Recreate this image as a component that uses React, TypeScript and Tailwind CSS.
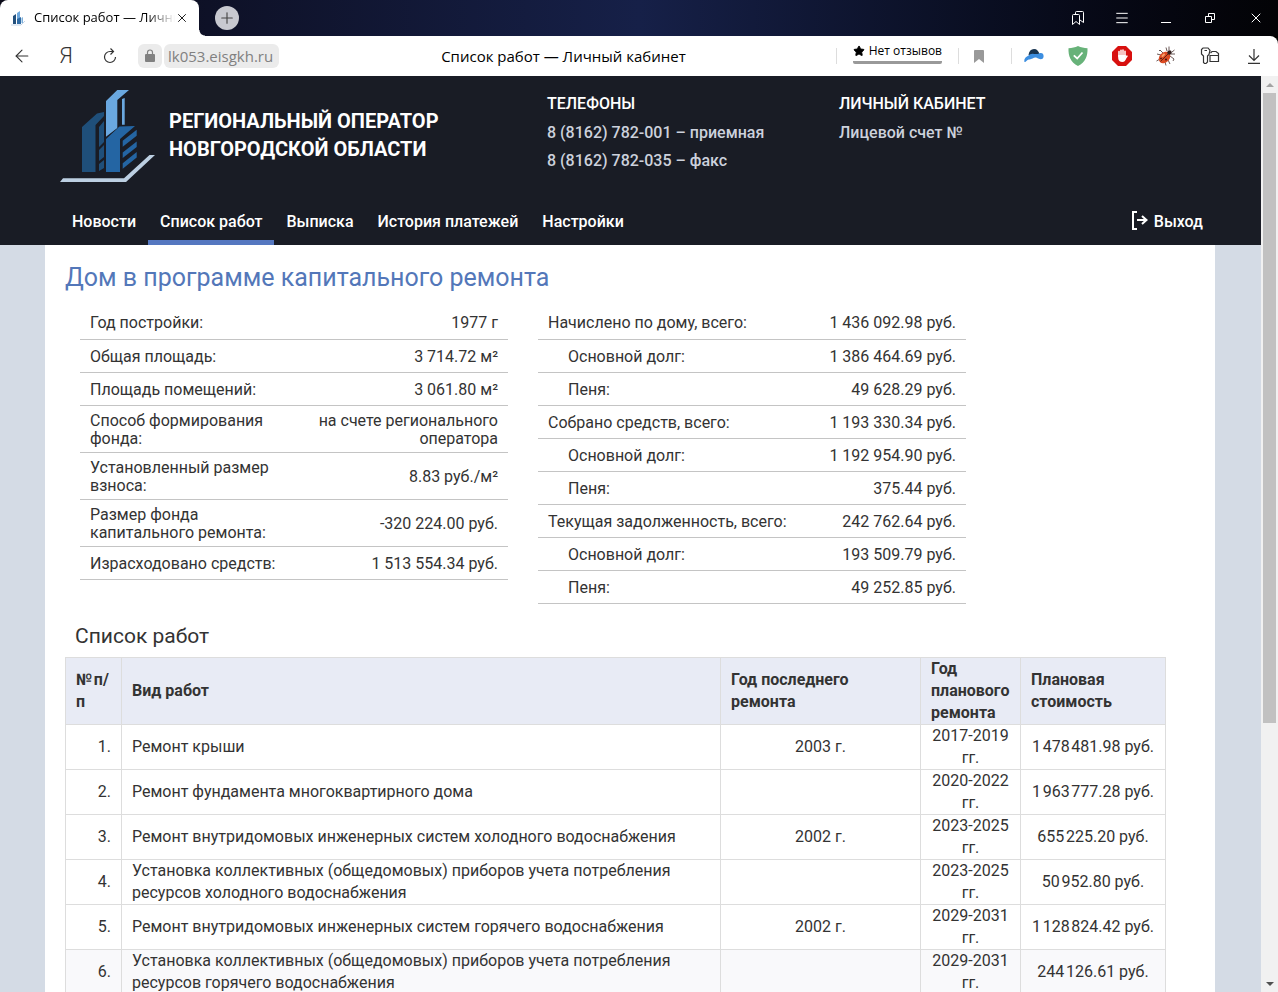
import { ArrowLeft, Menu, Plus, Star, X } from 'lucide-react';

type InfoRow = {
  label: string;
  value: string;
  nested?: boolean;
};

type Work = {
  name: string;
  last?: string;
  planned: string;
  cost: string;
};

const houseRows: InfoRow[] = [
  { label: 'Год постройки:', value: '1977 г' },
  { label: 'Общая площадь:', value: '3 714.72 м²' },
  { label: 'Площадь помещений:', value: '3 061.80 м²' },
  { label: 'Способ формирования фонда:', value: 'на счете регионального оператора' },
  { label: 'Установленный размер взноса:', value: '8.83 руб./м²' },
  { label: 'Размер фонда капитального ремонта:', value: '-320 224.00 руб.' },
  { label: 'Израсходовано средств:', value: '1 513 554.34 руб.' },
];

const moneyRows: InfoRow[] = [
  { label: 'Начислено по дому, всего:', value: '1 436 092.98 руб.' },
  { label: 'Основной долг:', value: '1 386 464.69 руб.', nested: true },
  { label: 'Пеня:', value: '49 628.29 руб.', nested: true },
  { label: 'Собрано средств, всего:', value: '1 193 330.34 руб.' },
  { label: 'Основной долг:', value: '1 192 954.90 руб.', nested: true },
  { label: 'Пеня:', value: '375.44 руб.', nested: true },
  { label: 'Текущая задолженность, всего:', value: '242 762.64 руб.' },
  { label: 'Основной долг:', value: '193 509.79 руб.', nested: true },
  { label: 'Пеня:', value: '49 252.85 руб.', nested: true },
];

// thousands are split with a hair space
const works: Work[] = [
  { name: 'Ремонт крыши', last: '2003 г.', planned: '2017-2019 гг.', cost: '1\u200A478\u200A481.98 руб.' },
  { name: 'Ремонт фундамента многоквартирного дома', planned: '2020-2022 гг.', cost: '1\u200A963\u200A777.28 руб.' },
  { name: 'Ремонт внутридомовых инженерных систем холодного водоснабжения', last: '2002 г.', planned: '2023-2025 гг.', cost: '655\u200A225.20 руб.' },
  { name: 'Установка коллективных (общедомовых) приборов учета потребления ресурсов холодного водоснабжения', planned: '2023-2025 гг.', cost: '50\u200A952.80 руб.' },
  { name: 'Ремонт внутридомовых инженерных систем горячего водоснабжения', last: '2002 г.', planned: '2029-2031 гг.', cost: '1\u200A128\u200A824.42 руб.' },
  { name: 'Установка коллективных (общедомовых) приборов учета потребления ресурсов горячего водоснабжения', planned: '2029-2031 гг.', cost: '244\u200A126.61 руб.' },
];

const navItems = ['Новости', 'Список работ', 'Выписка', 'История платежей', 'Настройки'];
const activeItem = 'Список работ';

const Logo = () => (
  <svg viewBox="0 0 95 92" className="w-[95px] h-[92px] shrink-0">
    <path d="M22 37 L37 23.500 L44 22 V26 L35.500 35 V82 H22 Z" fill="#1f4f7a" />
    <path d="M39 37 L44 31 V52 L39 57 Z M39 60 L44 55 V67 L39 71 Z M39 74 L44 70 V78 L39 81 Z" fill="#1f4f7a" />
    <path d="M46 11 L57.300 0 H69 L57.300 10 V38 L46 46.700 Z" fill="#6aa8e0" />
    <path d="M62 9 L64.700 8 V34.700 H62 Z" fill="#6aa8e0" />
    <path d="M46 49 L59.500 36.500 L75 36 L60 49 V82 H46 Z" fill="#2465a3" />
    <path d="M62.700 50.700 L76.700 39.700 V45.700 L62.700 56.700 Z M62.700 62.500 L76.700 51.500 V57 L62.700 68 Z M62.700 73.300 L76.700 62 V67.500 L62.700 78.700 Z" fill="#2465a3" />
    <path d="M0 92 L3 88.300 H64 L89.500 65 H95 L66 92 Z" fill="#bccfe2" />
  </svg>
);

const TitleBar = () => (
  <div className="h-9 flex items-stretch bg-linear-to-r from-[#0a0a18] via-[#162048] to-[#030306]">
    <div className="w-[199px] bg-white rounded-t-lg flex items-center px-2.5">
      <svg viewBox="0 0 16 16" className="w-4 h-4 mr-2">
        <path d="M1 15 H11 L15 11" fill="none" stroke="#c3d3e6" />
        <path d="M3 6 L6 4 V14 H3 Z" fill="#24507c" />
        <path d="M7 3 L10 1 V8 L7 10 Z" fill="#6fa9de" />
        <path d="M7 9 L11 7 V14 H7 Z" fill="#2f6ba5" />
        <path d="M11.500 8 L13 7 V13 H11.500 Z" fill="#7fb0da" />
      </svg>
      <span className="flex-1 overflow-hidden whitespace-nowrap text-[13px] text-black font-['Open_Sans',sans-serif] mask-r-from-80%">
        Список работ — Личный кабинет
      </span>
      <button aria-label="Закрыть вкладку"><X size={14} strokeWidth={1.5} /></button>
    </div>
    <div className="w-1.5 h-1.5 self-end bg-[radial-gradient(circle_at_100%_0%,transparent_5px,white_6px)]" />
    <button aria-label="Новая вкладка" className="self-center ml-2.5 w-6 h-6 rounded-full bg-[#c8c9d0] flex items-center justify-center text-[#444]">
      <Plus size={18} strokeWidth={1.5} />
    </button>
    <div className="ml-auto flex items-center gap-7 pr-3.5 text-white">
      <button aria-label="Закладки">
        <svg viewBox="0 0 16 16" className="w-4 h-4" fill="none" stroke="currentColor">
          <path d="M2.500 5.500 Q2.500 4.500 3.500 4.500 H8.500 Q9.500 4.500 9.500 5.500 V14.500 L6 11.500 L2.500 14.500 Z" />
          <path d="M5.500 4.500 V2.500 Q5.500 1.500 6.500 1.500 H12.500 Q13.500 1.500 13.500 2.500 V12.500 L10 10" />
        </svg>
      </button>
      <button aria-label="Меню"><Menu size={16} strokeWidth={1.5} /></button>
      <button aria-label="Свернуть">
        <svg viewBox="0 0 16 16" className="w-4 h-4" stroke="currentColor"><path d="M3 12.500 H13" /></svg>
      </button>
      <button aria-label="Развернуть" className="mr-0.5">
        <svg viewBox="0 0 16 16" className="w-4 h-4" fill="none" stroke="currentColor">
          <path d="M3.500 6.500 H9.500 V12.500 H3.500 Z M6.500 6 V3.500 H12.500 V9.500 H10" />
        </svg>
      </button>
      <button aria-label="Закрыть"><X size={16} strokeWidth={1.5} /></button>
    </div>
  </div>
);

const toolButton = 'w-11 h-10 flex items-center justify-center';

const Toolbar = () => (
  <div className="bg-black">
    <div className="h-10 flex items-center bg-white rounded-tr-lg pr-0.5 text-[#333] font-['Open_Sans',sans-serif]">
      <button aria-label="Назад" className={toolButton}><ArrowLeft size={20} strokeWidth={1.3} /></button>
      <button aria-label="Яндекс" className={toolButton}>
        <span className="text-[22px] leading-10 font-light font-[Roboto,sans-serif]">Я</span>
      </button>
      <button aria-label="Обновить" className={toolButton}>
        <svg viewBox="0 0 16 16" className="w-4 h-4" fill="none" stroke="currentColor" strokeWidth="1.2">
          <path d="M13.500 9 A5.500 5.500 0 1 1 8 3.500 H11.500" />
          <path d="M8.500 0.500 L11.500 3.500 L8.500 6.500" />
        </svg>
      </button>
      <div className="ml-1.5 w-6 h-6 rounded-md bg-[#ebebeb] flex items-center justify-center">
        <svg viewBox="0 0 12 14" className="w-3 h-3.5">
          <path d="M3.500 6 V3.500 a2.500 2.500 0 0 1 5 0 V6" fill="none" stroke="#808080" strokeWidth="1.200" />
          <rect x="1" y="5" width="10" height="8" rx="1" fill="#808080" />
        </svg>
      </div>
      <div className="ml-0.5 h-6 px-1 pr-1.5 rounded-md bg-[#ebebeb] text-[15px] leading-6 text-[#808080]">lk053.eisgkh.ru</div>
      <div className="flex-1 pl-3 text-center text-[15px] leading-6 text-black">Список работ — Личный кабинет</div>
      <div className="w-px h-4 bg-[#ddd]" />
      <a href="#" className="mx-4 mt-[5px] self-start flex items-center gap-1 border-b-3 border-[#999] rounded-xs text-xs leading-5 text-black">
        <Star size={12} fill="black" />
        Нет отзывов
      </a>
      <div className="w-px h-4 bg-[#ddd]" />
      <button aria-label="В закладки" className="w-10 h-10 mr-3 flex items-center justify-center">
        <svg viewBox="0 0 10 13" className="w-2.5 h-[13px]"><path d="M0 1 Q0 0 1 0 H9 Q10 0 10 1 V13 L5 9 L0 13 Z" fill="#999" /></svg>
      </button>
      <div className="w-px h-4 bg-[#ddd]" />
      <button aria-label="Расширение" className={toolButton}>
        <svg viewBox="0 0 20 16" className="w-5 h-4">
          <path d="M4.500 7 C5 3 7 1 10 1 C13 1 14.500 3 15.500 6 Z" fill="#17334f" />
          <path d="M0.500 14 C-0.500 10 3 8.500 6 6.500 C9 4.500 11 7 15 5.500 C18 4 20 6 19.500 9 C19 12 15.500 11.500 13 10 C10 8.500 8 12 5 11.500 C3 11.300 2 14.500 0.500 14 Z" fill="#3c8ee0" />
        </svg>
      </button>
      <button aria-label="Защита" className={toolButton}>
        <svg viewBox="0 0 20 20" className="w-5 h-5">
          <path d="M10 0 C13 1.500 16 2 19.500 2.200 C19.800 10 17.500 16 10 20 C2.500 16 0.200 10 0.500 2.200 C4 2 7 1.500 10 0 Z" fill="#67b279" />
          <path d="M5.800 9.300 L9.200 12.500 L14.500 6.500" fill="none" stroke="#fff" strokeWidth="1.800" />
        </svg>
      </button>
      <button aria-label="Блокировщик рекламы" className={toolButton}>
        <svg viewBox="0 0 20 20" className="w-5 h-5">
          <path d="M6 0 H14 L20 6 V14 L14 20 H6 L0 14 V6 Z" fill="#d8100f" />
          <path d="M7 10.500 V5.500 M9 10 V4.200 M11 10 V4 M13 10.500 V5.200" fill="none" stroke="#fff" strokeWidth="1.500" strokeLinecap="round" />
          <path d="M6.200 9 H13.800 V12 C13.800 14.500 12.500 16 10.300 16 C8 16 6.200 14.500 6.200 12 Z" fill="#fff" />
          <path d="M15 10 L13 13" stroke="#fff" strokeWidth="1.400" strokeLinecap="round" />
        </svg>
      </button>
      <button aria-label="Жук" className={toolButton}>
        <svg viewBox="0 0 20 20" className="w-5 h-5">
          <path d="M7 7 L4 4 L3 5 M12 14 L14 18 M5 9 L1 8 M9 16 L10 19.500 M4 13 L0.500 15 M14 10 L18 13 L17 15 M11 5 L10 1.500 M15 8 L19 8 M13 4 L13 0.500 M16 6 L18.500 4" fill="none" stroke="#5a4644" strokeWidth="0.900" />
          <ellipse cx="8.500" cy="11.500" rx="6.500" ry="5" transform="rotate(-45 8.500 11.500)" fill="#dc4a22" />
          <path d="M12.500 7.500 L4.500 15.500" stroke="#4a1a10" strokeWidth="0.800" />
          <path d="M6.500 10 L8 8.500" stroke="#f5a06a" strokeWidth="2" strokeLinecap="round" />
          <circle cx="10" cy="13.500" r="0.900" fill="#2a1210" />
          <circle cx="5" cy="12.500" r="0.800" fill="#2a1210" />
          <circle cx="13.500" cy="6.500" r="2.200" fill="#33211f" />
        </svg>
      </button>
      <button aria-label="Пароли" className={toolButton}>
        <svg viewBox="0 0 20 18" className="w-5 h-[18px]" fill="none" stroke="currentColor" strokeWidth="1.200">
          <path d="M3 1 H8 L10 3.500 L9 7.500 L7.500 9 V15 L6 16.500 H4.500 L3.500 15.500 V9 L1.500 7 V2.500 Z M4.500 3.500 H7" />
          <path d="M10.500 6 L12 4.500 H16 L18.500 6.500 V14.500 H10 V8.500 H18.500" />
        </svg>
      </button>
      <button aria-label="Загрузки" className={toolButton}>
        <svg viewBox="0 0 14 16" className="w-3.5 h-4" fill="none" stroke="currentColor" strokeWidth="1.200">
          <path d="M7 1 V12 M2 7.500 L7 12.500 L12 7.500 M1 15.300 H13" />
        </svg>
      </button>
    </div>
  </div>
);

const Header = () => (
  <header className="bg-[#191c25] text-white text-base pl-[60px] pr-[58px] pt-3.5">
    <div className="grid grid-cols-[487px_292px_1fr]">
      <div className="flex items-center gap-3.5">
        <Logo />
        <p className="text-xl leading-7 pb-0.5 font-bold uppercase">Региональный оператор<br />Новгородской области</p>
      </div>
      <div className="leading-7 font-medium text-[#ccd1dc]">
        <h2 className="pb-px text-white uppercase">Телефоны</h2>
        <p>8 (8162) 782-001 – приемная</p>
        <p>8 (8162) 782-035 – факс</p>
      </div>
      <div className="leading-7 font-medium text-[#ccd1dc]">
        <h2 className="pb-px text-white uppercase">Личный кабинет</h2>
        <p>Лицевой счет №</p>
      </div>
    </div>
    <nav className="mt-4 flex font-medium">
      {navItems.map((item) => (
        <a
          key={item}
          href="#"
          className={item === activeItem ? 'px-3 pt-3 pb-1.5 border-b-5 border-[#5577c0]' : 'px-3 pt-3'}
        >
          {item}
        </a>
      ))}
      <a href="#" className="ml-auto pt-3 flex items-start gap-1.5">
        <svg viewBox="0 0 17 19" className="w-[17px] h-[19px] mt-px" fill="none" stroke="currentColor" strokeWidth="2">
          <path d="M6 1 H2 V18 H6" />
          <path d="M6 9 H15 M11 5 L15.500 9 L11 13" />
        </svg>
        Выход
      </a>
    </nav>
  </header>
);

const InfoTable = ({ rows }: { rows: InfoRow[] }) => (
  <table className="w-[428px] self-start leading-[18px]">
    <tbody>
      {rows.map((row, i) => (
        <tr key={i} className="h-[33px] border-b border-[#c4c4c4]">
          <th scope="row" className={row.nested ? 'pt-1.5 pb-1 pl-[30px] text-left font-normal' : 'pt-1.5 pb-1 pl-2.5 text-left font-normal'}>
            {row.label}
          </th>
          <td className="pt-1.5 pb-1 pr-2.5 text-right">{row.value}</td>
        </tr>
      ))}
    </tbody>
  </table>
);

const cell = 'border border-[#ddd] px-2.5';

const WorksTable = () => (
  <table className="w-full table-fixed leading-[22px]">
    <thead>
      <tr className="bg-[#e8ebf5] text-left">
        <th className={`${cell} w-14`}>№{'\u200A'}п/<wbr />п</th>
        <th className={cell}>Вид работ</th>
        <th className={`${cell} w-[200px]`}>Год последнего ремонта</th>
        <th className={`${cell} w-[100px]`}>Год планового ремонта</th>
        <th className={`${cell} w-[145px]`}>Плановая стоимость</th>
      </tr>
    </thead>
    <tbody>
      {works.map((work, i) => (
        <tr key={work.name} className={i === 5 ? 'h-[45px] bg-[#f9f9fb]' : 'h-[45px]'}>
          <td className={`${cell} text-right`}>{i + 1}.</td>
          <td className={`${cell} pr-10`}>{work.name}</td>
          <td className={`${cell} text-center`}>{work.last}</td>
          <td className={`${cell} text-center`}>{work.planned}</td>
          <td className={`${cell} text-center whitespace-nowrap`}>{work.cost}</td>
        </tr>
      ))}
    </tbody>
  </table>
);

const Scrollbar = () => (
  <div className="w-[17px] shrink-0 flex flex-col items-center bg-[#f1f1f1]">
    <div className="h-[17px] flex items-center">
      <svg viewBox="0 0 8 4" className="w-2 h-1"><path d="M0 4 L4 0 L8 4 Z" fill="#a3a3a3" /></svg>
    </div>
    <div className="w-[13px] grow-5 bg-[#c1c1c1]" />
    <div className="grow-2" />
    <div className="h-[17px] flex items-center">
      <svg viewBox="0 0 8 4" className="w-2 h-1"><path d="M0 0 L4 4 L8 0 Z" fill="#505050" /></svg>
    </div>
  </div>
);

const App = () => (
  <div className="h-screen flex flex-col overflow-hidden bg-white">
    <TitleBar />
    <Toolbar />
    <div className="flex flex-1 min-h-0 font-[Roboto,sans-serif]">
      <div className="flex-1 min-w-0 overflow-hidden bg-[#d4dbe5]">
        <Header />
        <main className="ml-[45px] mr-[46px] bg-white px-5 pt-[17px] pb-10 text-base text-[#333]">
          <h1 className="text-[25px] leading-8 text-[#5377b9]">Дом в программе капитального ремонта</h1>
          <div className="mt-3 px-[15px] flex gap-[30px]">
            <InfoTable rows={houseRows} />
            <InfoTable rows={moneyRows} />
          </div>
          <section className="pr-[29px]">
            <h2 className="mt-4 mb-[5px] pl-2.5 text-[21px] leading-8">Список работ</h2>
            <WorksTable />
          </section>
        </main>
      </div>
      <Scrollbar />
    </div>
  </div>
);

export default App;
